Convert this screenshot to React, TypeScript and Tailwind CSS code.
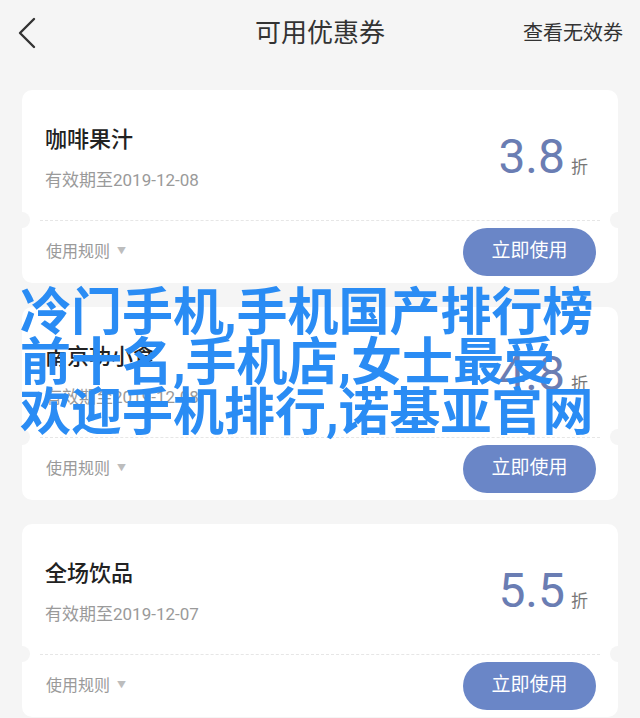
type Coupon = { title: string; expire: string; rate: string };

const coupons: Coupon[] = [
  { title: '咖啡果汁', expire: '有效期至2019-12-08', rate: '3.8' },
  { title: '南京功小食', expire: '有效期至2019-12-08', rate: '4.8' },
  { title: '全场饮品', expire: '有效期至2019-12-07', rate: '5.5' },
];

function CouponCard({ coupon }: { coupon: Coupon }) {
  return (
    <div className="relative mx-[22px] h-[193px] rounded-[10px] bg-white overflow-hidden">
      {/* top part */}
      <div className="flex h-[130px] justify-between pl-[23px] pr-[30px]">
        <div className="pt-[36px]">
          <div className="text-[22px] leading-[28px] font-medium text-[#222]">{coupon.title}</div>
          <div className="mt-[14px] text-[17px] leading-[24px] text-[#9a9a9a]">{coupon.expire}</div>
        </div>
        <div className="flex items-baseline pt-[43px]">
          <span className="text-[48px] leading-none text-[#6a7db3]">{coupon.rate}</span>
          <span className="ml-[6px] text-[17px] text-[#777]">折</span>
        </div>
      </div>

      {/* ticket notches + dashed line */}
      <span className="absolute left-[-8px] top-[122px] h-[16px] w-[16px] rounded-full bg-[#f5f5f5]" />
      <span className="absolute right-[-8px] top-[122px] h-[16px] w-[16px] rounded-full bg-[#f5f5f5]" />
      <div className="mx-[18px] border-t border-dashed border-[#e6e6e6]" />

      {/* bottom part */}
      <div className="flex h-[63px] items-center justify-between pl-[24px] pr-[22px] pt-[4px] pb-[6px]">
        <div className="flex items-center gap-[7px] text-[16px] text-[#9a9a9a]">
          使用规则
          <span className="text-[9px] text-[#bdbdbd]">▼</span>
        </div>
        <button className="h-[48px] w-[133px] rounded-full bg-[#6a86c7] text-[19px] text-white">
          立即使用
        </button>
      </div>
    </div>
  );
}

export default function App() {
  return (
    <div
      className="relative h-[718px] w-[640px] overflow-hidden bg-[#f5f5f5]"
      style={{ fontFamily: 'Roboto, "Noto Sans CJK SC", sans-serif' }}
    >
      {/* header */}
      <div className="flex h-[66px] items-center justify-between pl-[17px] pr-[17px]">
        <svg width="20" height="32" viewBox="0 0 20 32" fill="none" className="text-[#333]">
          <path d="M17 2 L3 16 L17 30" stroke="currentColor" strokeWidth="2.4" strokeLinecap="round" strokeLinejoin="round" />
        </svg>
        <h1 className="absolute left-0 right-0 top-[16px] text-center text-[26px] leading-[34px] text-[#333]">
          可用优惠券
        </h1>
        <span className="text-[20px] text-[#333]">查看无效券</span>
      </div>

      <div className="flex flex-col gap-[24px] pt-[24px]">
        {coupons.map((c) => (
          <CouponCard key={c.rate} coupon={c} />
        ))}
      </div>

      {/* watermark title over the page */}
      <div className="absolute left-[20px] top-[288px] whitespace-nowrap text-[51px] leading-[50px] font-bold text-[#2a8cf4]">
        <div>冷门手机,手机国产排行榜</div>
        <div>前十名,手机店,女士最受</div>
        <div>欢迎手机排行,诺基亚官网</div>
      </div>
    </div>
  );
}
